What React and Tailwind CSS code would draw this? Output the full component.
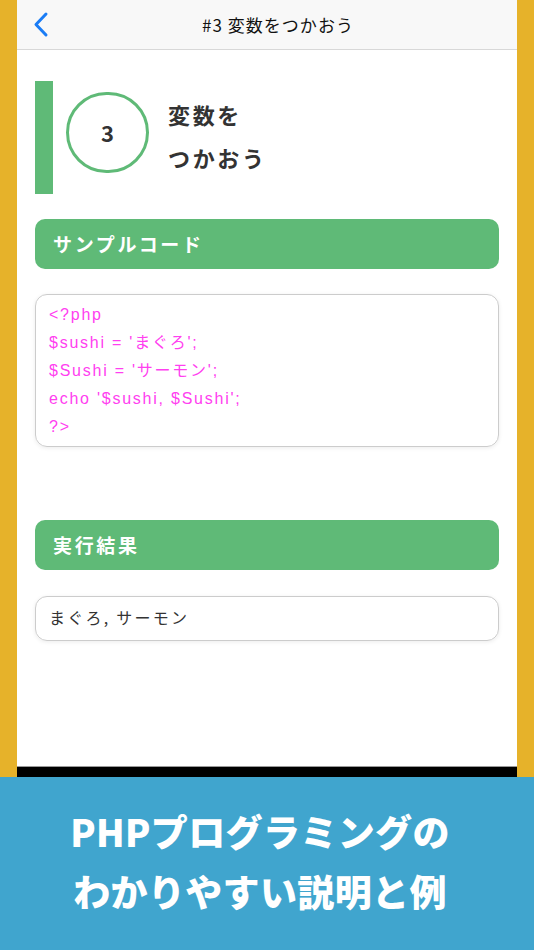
import React from 'react';

const codeLines = ["<?php", "$sushi = 'まぐろ';", "$Sushi = 'サーモン';", "echo '$sushi, $Sushi';", "?>"];

const SectionHeader = ({ title }) => (
  <div className="h-[50px] rounded-[10px] bg-[#5fba77] flex items-center px-[18px]">
    <span className="text-white font-bold text-[19px] tracking-[0.14em]">{title}</span>
  </div>
);

export default function App() {
  return (
    <div
      className="w-[534px] h-[950px] bg-[#e6b22a] flex flex-col overflow-hidden"
      style={{ fontFamily: '"Noto Sans CJK JP", "Noto Sans", sans-serif' }}
    >
      <div className="mx-[17px] w-[500px] h-[766px] bg-white flex flex-col">
        {/* nav bar */}
        <div className="relative h-[50px] bg-[#f8f8f8] border-b border-[#d8d8d8] flex items-center justify-center shrink-0 pl-[22px]">
          <svg className="absolute left-[15px] top-[11px]" width="18" height="27" viewBox="0 0 18 27" fill="none">
            <path d="M14 3 L4 13.5 L14 24" stroke="#1a7cf5" strokeWidth="3" strokeLinecap="round" strokeLinejoin="round" />
          </svg>
          <span className="text-[17px] font-normal text-[#111] tracking-[0.06em]">#3 変数をつかおう</span>
        </div>

        <div className="px-[18px] pt-[31px] flex flex-col">
          {/* lesson title */}
          <div className="flex items-start h-[113px]">
            <div className="w-[18px] h-full bg-[#5fba77]" />
            <div className="ml-[13px] mt-[11px] w-[83px] h-[81px] rounded-full border-[3px] border-[#5fba77] flex items-center justify-center">
              <span className="text-[22px] font-bold text-[#333]">3</span>
            </div>
            <div className="ml-[19px] mt-[12px] flex flex-col text-[22px] font-bold text-[#333] leading-[43px] tracking-[0.12em]">
              <span>変数を</span>
              <span>つかおう</span>
            </div>
          </div>

          <div className="mt-[25px]">
            <SectionHeader title="サンプルコード" />
          </div>

          <div className="mt-[25px] h-[153px] rounded-[12px] border border-[#cccccc] shadow-[0_1px_4px_rgba(0,0,0,0.08)] px-[13px] pt-[6px]">
            {codeLines.map((line, i) => (
              <div
                key={i}
                className="text-[16px] leading-[28px] text-[#ff40f0] tracking-[0.11em]"
                style={{ fontFamily: '"Liberation Sans", "Noto Sans CJK JP", sans-serif' }}
              >
                {line}
              </div>
            ))}
          </div>

          <div className="mt-[73px]">
            <SectionHeader title="実行結果" />
          </div>

          <div className="mt-[26px] h-[45px] rounded-[12px] border border-[#cccccc] shadow-[0_1px_4px_rgba(0,0,0,0.08)] px-[13px] flex items-center">
            <span className="text-[16px] text-[#333] tracking-[0.14em] -mt-[3px]">まぐろ, サーモン</span>
          </div>
        </div>
      </div>

      <div className="mx-[17px] w-[500px] h-[11px] bg-black border-t border-[#999]" />

      <div className="flex-1 bg-[#40a5ce] flex flex-col items-center pt-[24px] pr-[14px]">
        <span className="text-white font-black text-[37px] leading-[60px] tracking-[0.01em]">PHPプログラミングの</span>
        <span className="text-white font-black text-[37px] leading-[60px] tracking-[0.01em]">わかりやすい説明と例</span>
      </div>
    </div>
  );
}
